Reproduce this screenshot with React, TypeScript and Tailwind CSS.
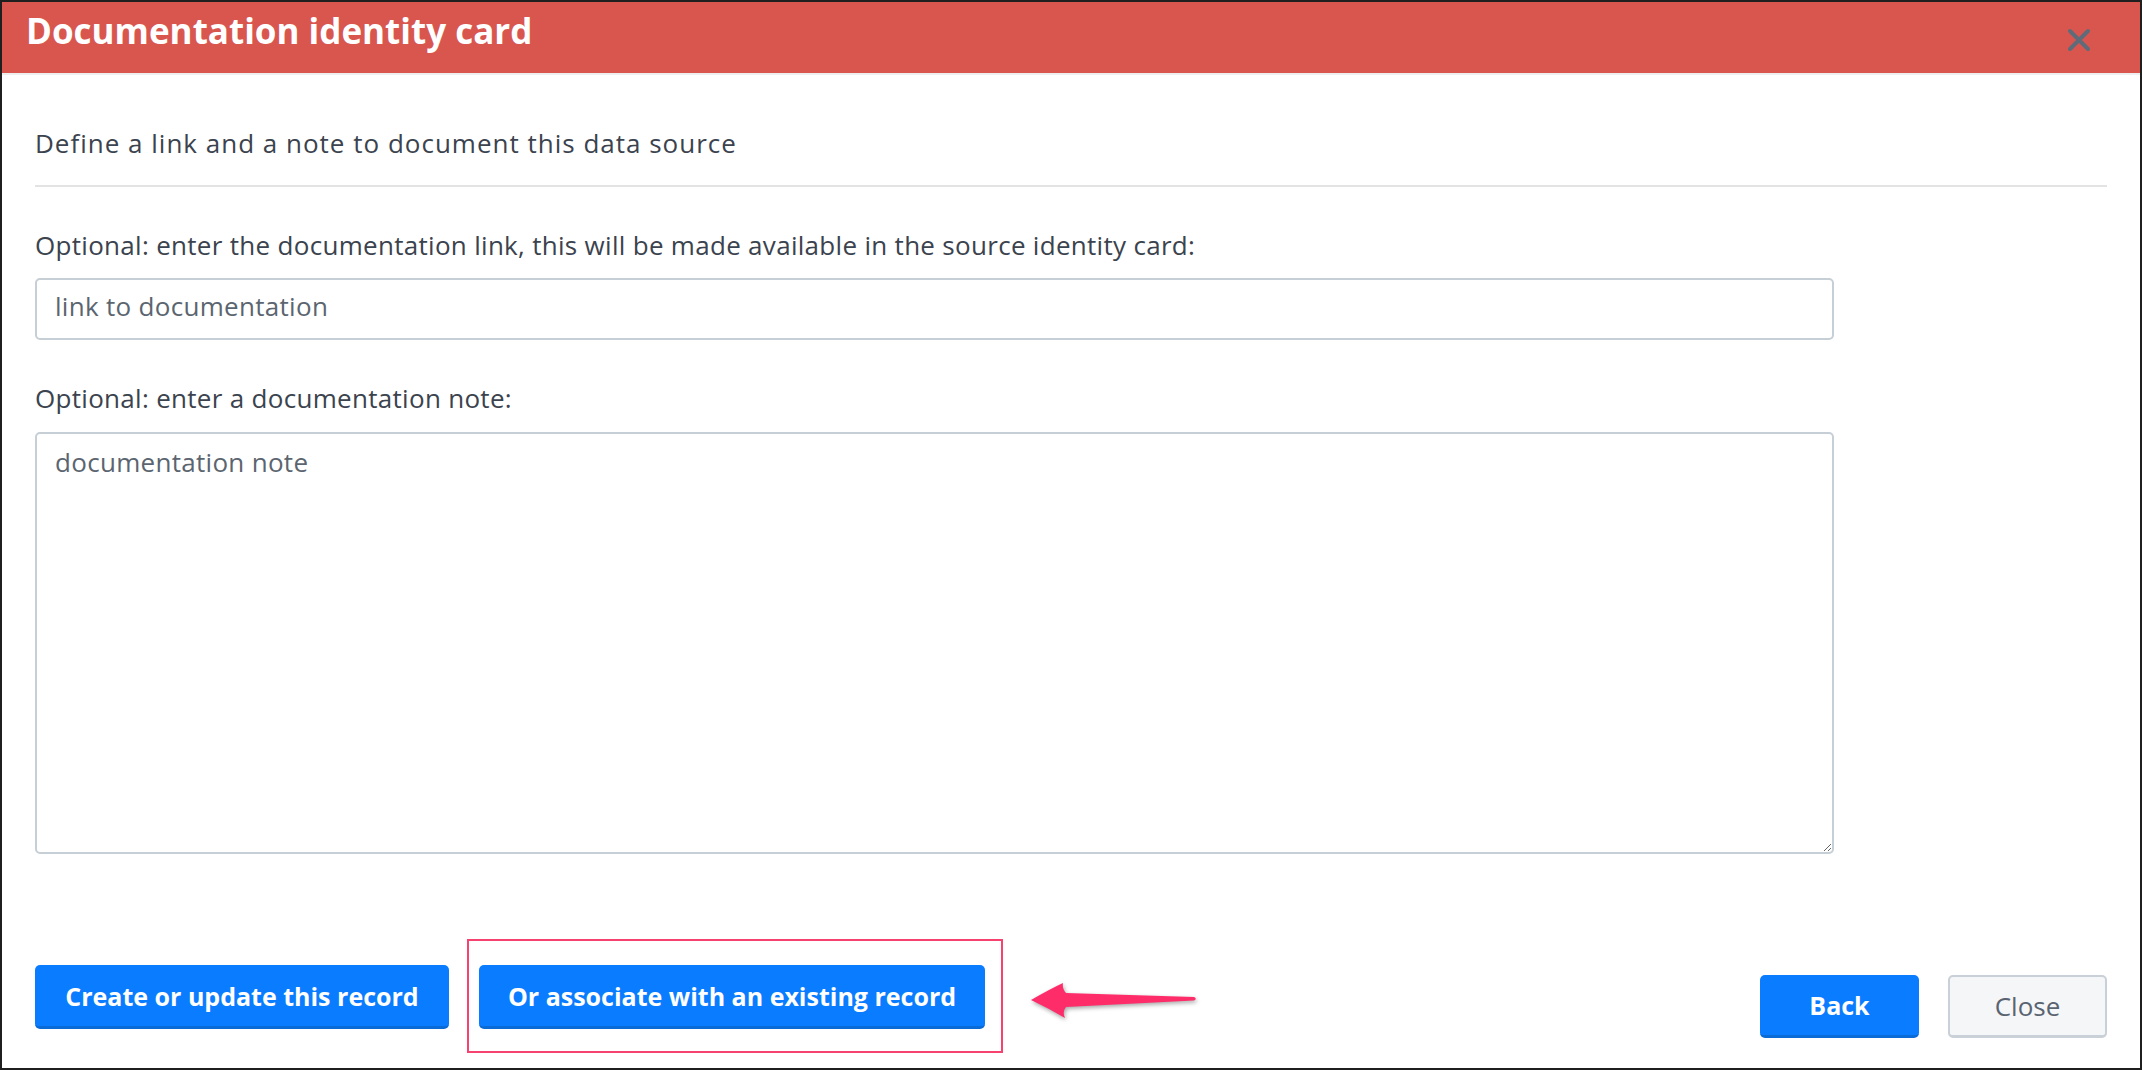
import { useState } from "react";

export default function App() {
  const [link, setLink] = useState("");
  const [note, setNote] = useState("");

  return (
    <div className="w-[2142px] h-[1070px] border-2 border-[#1f1f1f] bg-white flex flex-col font-['Open_Sans',sans-serif]">
      {/* Header */}
      <div className="h-[73px] shrink-0 bg-[#d9564f] flex items-start justify-between pl-[24px] pr-[48px] pt-[9px] border-b-[2px] border-[#eeeeee]">
        <h1 className="text-[35px] leading-[40px] font-bold text-white">Documentation identity card</h1>
        <button className="mt-[16px]">
          <svg width="26" height="26" viewBox="0 0 26 26" fill="none" stroke="#5f6b79" strokeWidth="4" strokeLinecap="round">
            <path d="M4 4L22 22M22 4L4 22" />
          </svg>
        </button>
      </div>

      {/* Body */}
      <div className="flex-1 flex flex-col px-[33px] pt-[53px] text-[26px] leading-[30px] tracking-[0.3px]">
        <p className="text-[#3b434e] tracking-[1px]">
          Define a link and a note to document this data source
        </p>
        <div className="mt-[27px] h-[2px] bg-[#e3e3e3]" />

        <div className="w-[1799px]">
          <label className="block mt-[43px] text-[#3b434e]">
            Optional: enter the documentation link, this will be made available in the source identity card:
          </label>
          <input
            type="text"
            value={link}
            onChange={(e) => setLink(e.target.value)}
            placeholder="link to documentation"
            className="mt-[18px] w-full h-[62px] pl-[18px] pt-[11px] pb-[17px] text-[26px] leading-[30px] tracking-[0.3px] text-[#3b434e] placeholder:text-[#5b6570] border-2 border-[#c6ced6] rounded-[5px] outline-none"
          />

          <label className="block mt-[43px] text-[#3b434e]">
            Optional: enter a documentation note:
          </label>
          <textarea
            value={note}
            onChange={(e) => setNote(e.target.value)}
            placeholder="documentation note"
            className="mt-[19px] block w-full h-[422px] pl-[18px] pt-[13px] text-[26px] leading-[30px] tracking-[0.3px] text-[#3b434e] placeholder:text-[#5b6570] border-2 border-[#c6ced6] rounded-[5px] outline-none resize-y"
          />
        </div>

        {/* Footer */}
        <div className="mt-[111px] flex items-start justify-between tracking-normal">
          <div className="flex items-start">
            <button className="w-[414px] h-[64px] rounded-[5px] bg-[#0a7cff] border-b-[3px] border-[#0a6ad6] text-white text-[25px] font-bold">
              Create or update this record
            </button>
            <div className="relative ml-[30px]">
              <button className="w-[506px] h-[64px] rounded-[5px] bg-[#0a7cff] border-b-[3px] border-[#0a6ad6] text-white text-[25px] font-bold">
                Or associate with an existing record
              </button>
              <div className="absolute -left-[12px] -right-[18px] -top-[26px] -bottom-[24px] border-2 border-[#f7416f] pointer-events-none" />
            </div>
            <svg
              width="185"
              height="50"
              viewBox="0 0 185 50"
              className="ml-[35px] mt-[10px] drop-shadow-[1px_2px_2px_rgba(0,0,0,0.35)]"
            >
              <path
                d="M11 25 Q30 14 43 8 Q42 14 46 18 L174 22 Q177.5 23.7 174 25.5 L46 32 Q42 37 45 43 Q28 33 11 25 Z"
                fill="#fe2d6a"
              />
            </svg>
          </div>
          <div className="flex items-start gap-[29px] mt-[10px]">
            <button className="w-[159px] h-[63px] rounded-[5px] bg-[#0a7cff] border-b-[3px] border-[#0a6ad6] text-white text-[25px] font-bold">
              Back
            </button>
            <button className="w-[159px] h-[63px] rounded-[5px] bg-[#f5f6f8] border-2 border-b-[3px] border-[#c9d0d7] text-[#5a6471] text-[26px]">
              Close
            </button>
          </div>
        </div>
      </div>
    </div>
  );
}
